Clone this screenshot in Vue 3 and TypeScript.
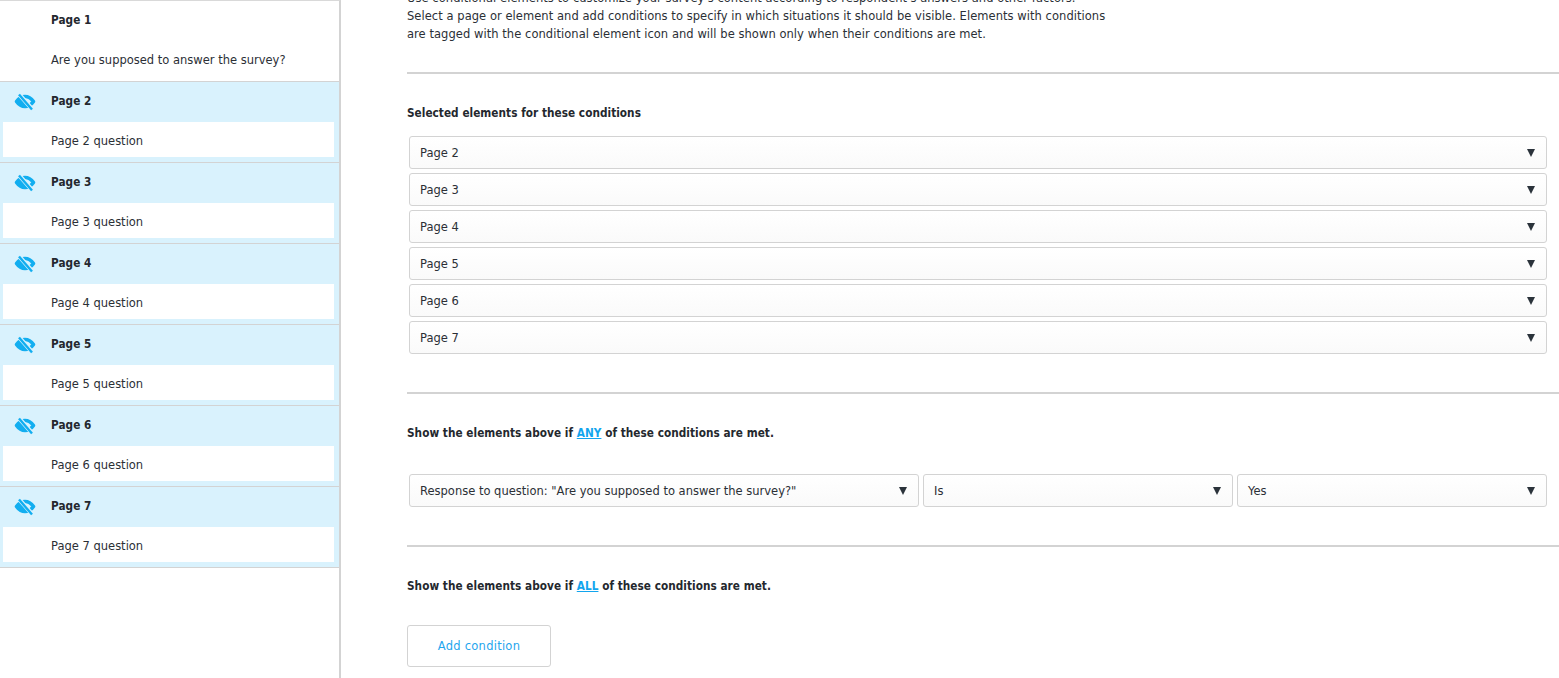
<script setup lang="ts">
const pages = [2, 3, 4, 5, 6, 7]
const triple = [
  { label: 'Response to question: "Are you supposed to answer the survey?"', cls: 'wide' },
  { label: 'Is', cls: 'narrow' },
  { label: 'Yes', cls: 'narrow' },
]
</script>

<template>
  <div class="app">
    <aside class="side">
      <section class="row first">
        <div class="head"><b>Page 1</b></div>
        <div class="body">Are you supposed to answer the survey?</div>
      </section>
      <section v-for="p in pages" :key="p" class="row cond">
        <div class="head">
          <svg class="eye" viewBox="0 0 22 18" width="22" height="18" aria-hidden="true">
            <path fill="none" stroke="#12aef0" stroke-width="3.600" stroke-linejoin="round" d="M2.500 8.500C5 5 7.500 3.500 11 3.500S17 5 19.500 8.500C17 12 14.500 13.500 11 13.500S5 12 2.500 8.500Z"/>
            <path fill="#12aef0" d="M3 8.500 7 4.500 14 13 9 14Z"/>
            <path stroke="#d9f2fd" stroke-width="4.200" d="M4.500 0.500 18.500 16.500"/>
            <path stroke="#12aef0" stroke-width="2.400" d="M5 1.500 18 16.500"/>
          </svg>
          <b>Page {{ p }}</b>
        </div>
        <div class="body">Page {{ p }} question</div>
      </section>
    </aside>

    <main class="main">
      <p class="intro">
        Use conditional elements to customize your survey's content according to respondent's answers and other factors.<br />
        Select a page or element and add conditions to specify in which situations it should be visible. Elements with conditions<br />
        are tagged with the conditional element icon and will be shown only when their conditions are met.
      </p>
      <hr class="rule r1" />
      <h3 class="title t1">Selected elements for these conditions</h3>
      <div class="stack">
        <div v-for="p in pages" :key="p" class="select">
          <span>Page {{ p }}</span><i class="caret"></i>
        </div>
      </div>
      <hr class="rule r2" />
      <h3 class="title t2">Show the elements above if <a>ANY</a> of these conditions are met.</h3>
      <div class="triple">
        <div v-for="s in triple" :key="s.label" class="select" :class="s.cls">
          <span>{{ s.label }}</span><i class="caret"></i>
        </div>
      </div>
      <hr class="rule r3" />
      <h3 class="title t3">Show the elements above if <a>ALL</a> of these conditions are met.</h3>
      <button class="add" type="button">Add condition</button>
    </main>
  </div>
</template>

<style>
html, body { margin: 0; height: 100%; overflow: hidden; background: #fff; }
</style>

<style scoped>
.app {
  display: flex;
  height: 678px;
  overflow: hidden;
  font-family: "DejaVu Sans", sans-serif;
  font-size: 11.5px;
  color: #2b2f36;
}
.side {
  box-sizing: border-box;
  width: 341px;
  flex: none;
  border-right: 2px solid #d3d3d3;
  border-top: 1px solid #d9d9d9;
}
.row {
  box-sizing: border-box;
  height: 81px;
  border-bottom: 1px solid #d3d3d3;
  display: flex;
  flex-direction: column;
}
.head {
  height: 40px;
  display: flex;
  align-items: center;
  padding: 0 0 2px 51px;
  box-sizing: border-box;
  position: relative;
  flex: none;
}
.head b {
  font-family: "DejaVu Sans Condensed", "DejaVu Sans", sans-serif;
  font-stretch: condensed;
  font-size: 11.700px;
  font-weight: 700;
  letter-spacing: 0.04px;
  color: #24282e;
}
.first .head { height: 39px; }
.body {
  box-sizing: border-box;
  height: 35px;
  flex: none;
  display: flex;
  align-items: center;
  padding: 2px 0 0 48px;
  margin: 0 5px 0 3px;
}
.first .body { padding-top: 5px; }
.cond { background: #d9f2fd; }
.cond .body { background: #fff; }
.eye { position: absolute; left: 14px; top: 11px; }
.main {
  flex: 1;
  min-width: 0;
  padding-left: 66px;
}
.intro {
  margin: -11px 0 0;
  line-height: 18px;
  width: 720px;
  white-space: nowrap;
  letter-spacing: 0.05px;
}
.rule {
  height: 2px;
  border: 0;
  background: #d3d3d3;
  margin: 0;
}
.r1 { margin-top: 29px; }
.r2 { margin-top: 38px; }
.r3 { margin-top: 38px; }
.title {
  margin: 0;
  font-family: "DejaVu Sans Condensed", "DejaVu Sans", sans-serif;
  font-stretch: condensed;
  font-size: 11.700px;
  font-weight: 700;
  letter-spacing: 0.04px;
  line-height: 16px;
  color: #24282e;
}
.title a { color: #12a5ee; text-decoration: underline; }
.t1 { margin-top: 31px; }
.t2 { margin-top: 31px; }
.t3 { margin-top: 31px; }
.stack {
  margin: 15px 12px 0 2px;
  display: flex;
  flex-direction: column;
  gap: 4px;
}
.select {
  box-sizing: border-box;
  height: 33px;
  display: flex;
  align-items: center;
  justify-content: space-between;
  padding: 0 11px 0 10px;
  border: 1px solid #d3d3d3;
  border-radius: 3px;
  background: linear-gradient(#fff, #fafafa);
}
.caret {
  width: 0;
  height: 0;
  border-left: 4.500px solid transparent;
  border-right: 4.500px solid transparent;
  border-top: 8px solid #2b333b;
}
.triple {
  margin: 33px 12px 0 2px;
  display: flex;
  gap: 4px;
}
.wide { width: 510px; flex: none; }
.narrow { width: 310px; flex: none; }
.add {
  display: block;
  box-sizing: border-box;
  margin-top: 31px;
  width: 144px;
  height: 42px;
  border: 1px solid #d3d3d3;
  border-radius: 3px;
  background: #fff;
  font: inherit;
  letter-spacing: 0.25px;
  color: #1fa6ee;
}
</style>
